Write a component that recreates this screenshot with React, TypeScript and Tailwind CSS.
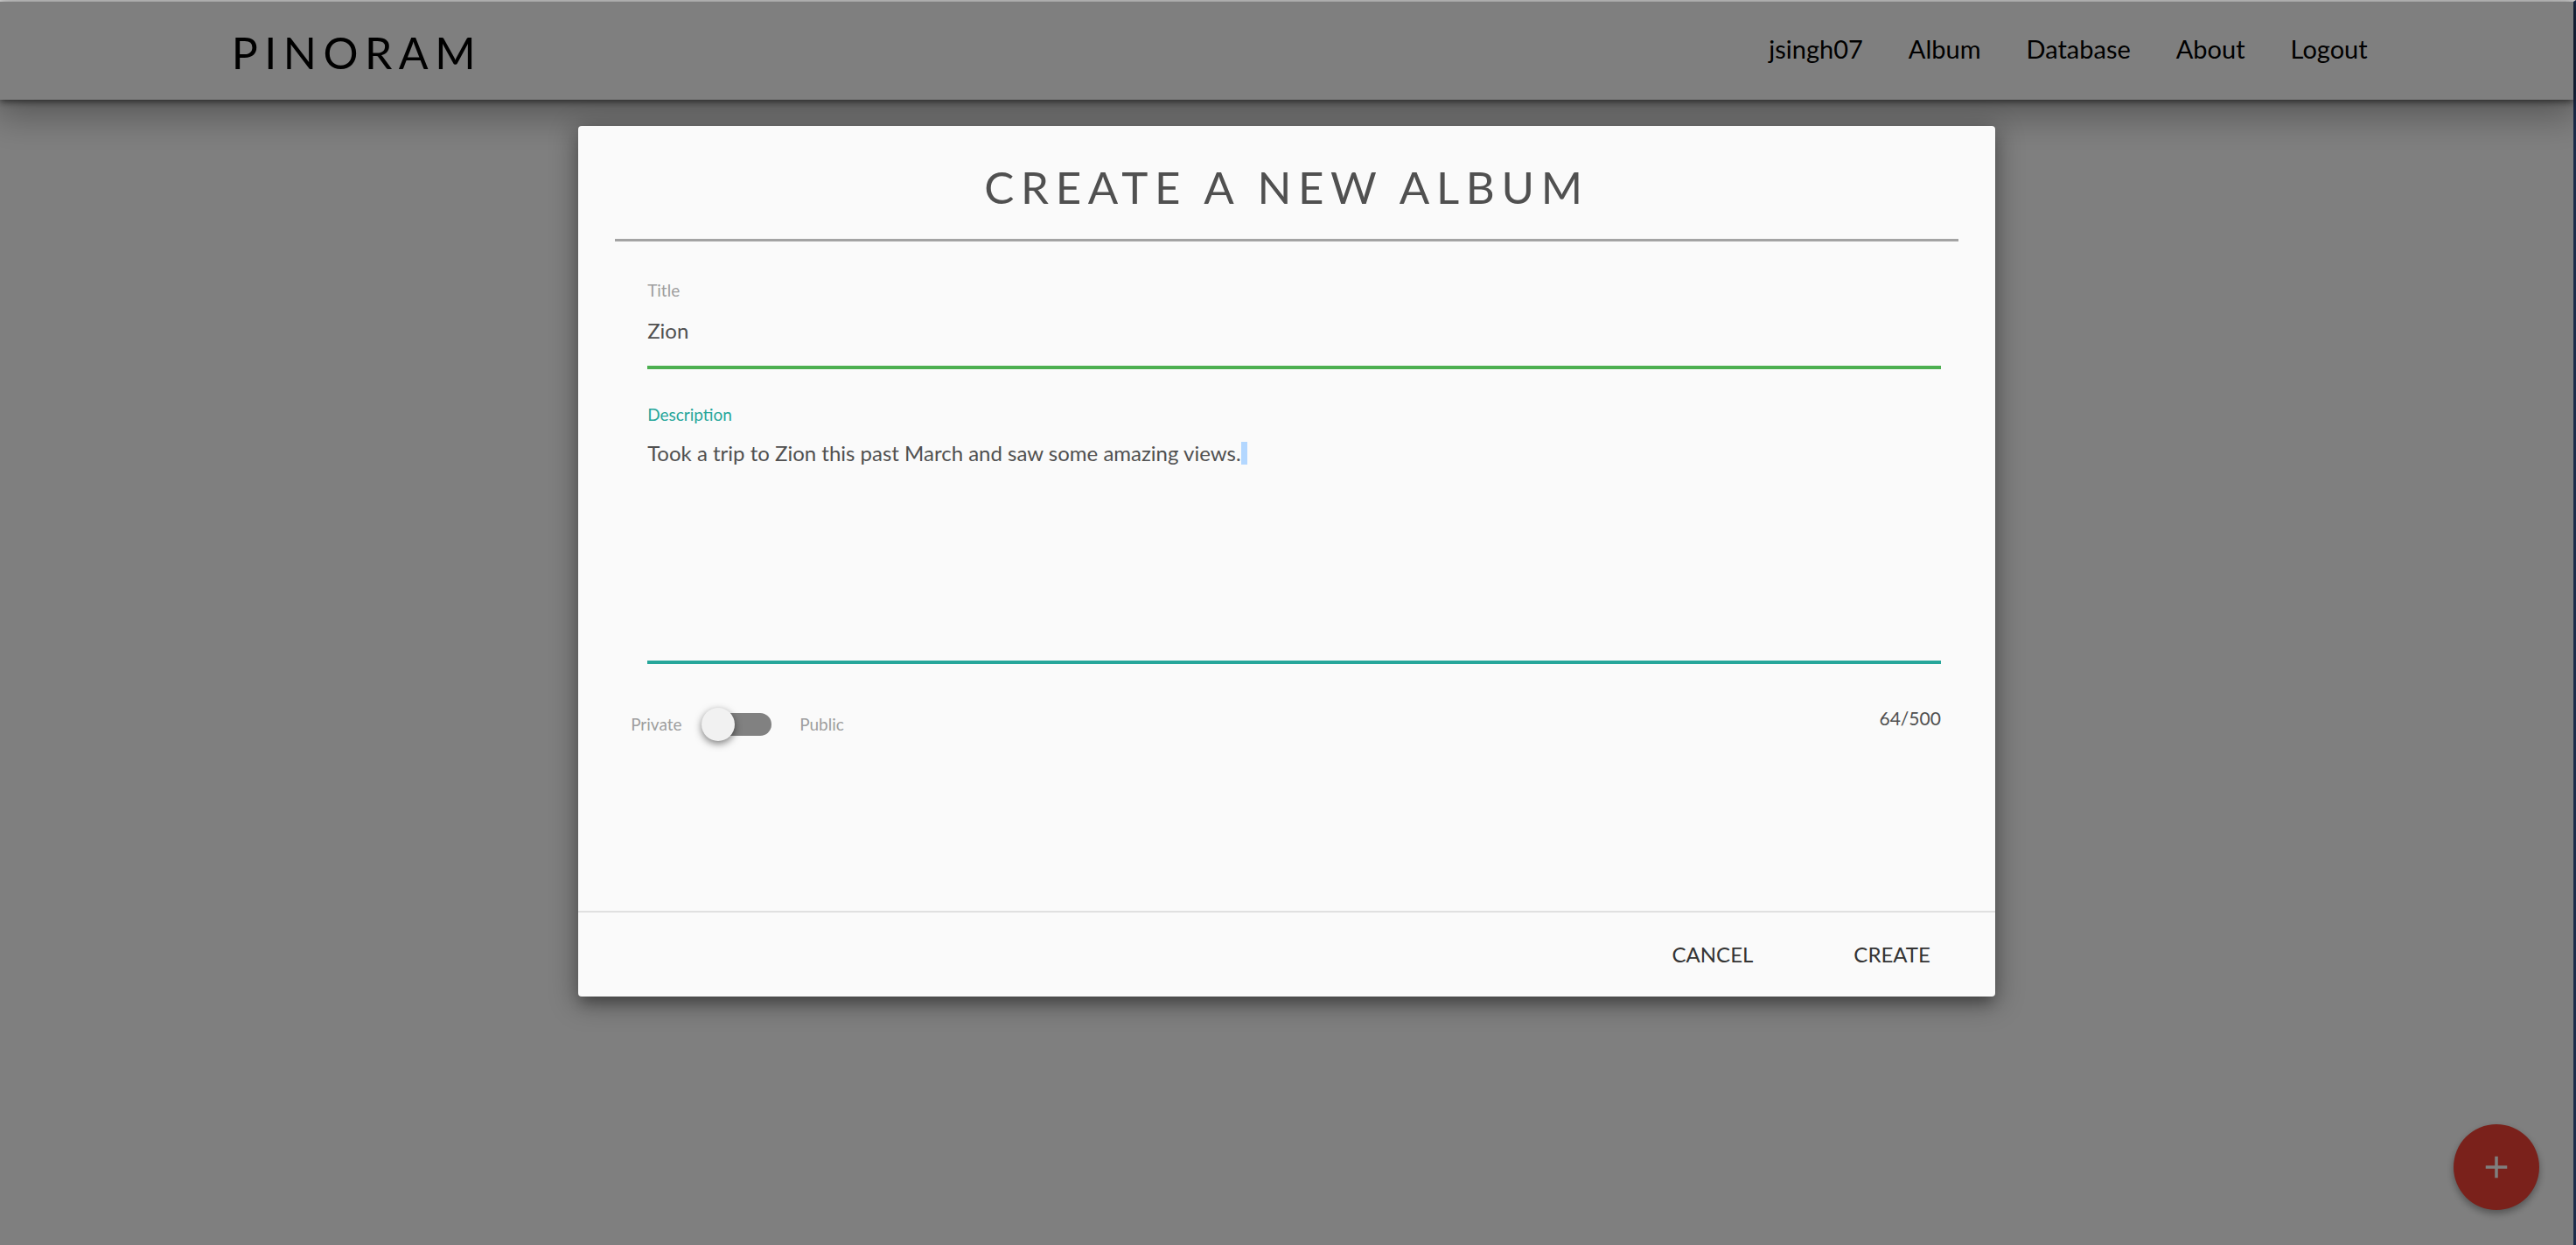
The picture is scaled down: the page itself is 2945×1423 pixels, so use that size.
import { useState } from "react";

const links = ["jsingh07", "Album", "Database", "About", "Logout"];

function NavBar() {
  return (
    <header className="relative flex h-28 items-center justify-between bg-white pl-[9%] pr-[8%] text-black shadow-[0_2px_8px_rgba(0,0,0,0.6),0_16px_40px_4px_rgba(0,0,0,0.3)]">
      <a href="#home" className="pt-1 text-[50px] leading-[60px] tracking-[0.15em]">
        PINORAM
      </a>
      <nav className="flex gap-[52px] pb-1 text-[29px] leading-8">
        {links.map((label) => (
          <a key={label} href={"#" + label.toLowerCase()}>
            {label}
          </a>
        ))}
      </nav>
    </header>
  );
}

function VisibilitySwitch() {
  return (
    <label className="flex items-center text-[19px] leading-6 text-[#9e9e9e]">
      <span className="w-[81px]">Private</span>
      <span className="relative flex h-[38px] w-20 items-center justify-end">
        <input type="checkbox" role="switch" className="peer sr-only" />
        <span className="h-[26px] w-[70px] rounded-full bg-[#818181] peer-checked:bg-[#84c7c1]" />
        <span className="absolute left-0 top-0 size-[38px] rounded-full bg-[#f1f1f1] shadow-[0_3px_8px_rgba(0,0,0,0.5)] peer-checked:left-[42px] peer-checked:bg-[#26a69a]" />
      </span>
      <span className="ml-8">Public</span>
    </label>
  );
}

function AlbumDialog() {
  const [title, setTitle] = useState("Zion");
  const [description, setDescription] = useState(
    "Took a trip to Zion this past March and saw some amazing views.",
  );

  return (
    <form
      role="dialog"
      aria-labelledby="dialog-title"
      onSubmit={(event) => event.preventDefault()}
      className="w-[55vw] rounded-[4px] bg-[#fafafa] text-[#505050] shadow-[0_10px_14px_-4px_rgba(0,0,0,0.3),0_6px_30px_4px_rgba(0,0,0,0.3)]"
    >
      <div className="px-[42px] pt-[38px]">
        <h1 id="dialog-title" className="text-center text-[51px] leading-[64px] tracking-[0.15em]">
          CREATE A NEW ALBUM
        </h1>
        <hr className="mt-[27px] border-t-[3px] border-[#a3a3a3]" />

        <div className="pl-[37px] pr-5 pt-11">
          <div className="flex flex-col">
            <label htmlFor="album-title" className="text-[19px] leading-6 text-[#9e9e9e]">
              Title
            </label>
            <input
              id="album-title"
              value={title}
              onChange={(event) => setTitle(event.target.value)}
              className="h-[78px] border-b-4 border-[#4caf50] pb-2 text-[24px] leading-8 outline-none"
            />
          </div>

          <div className="mt-10 flex flex-col">
            <label htmlFor="album-description" className="text-[19px] leading-6 text-[#26a69a]">
              Description
            </label>
            <div className="relative flex flex-col">
              <textarea
                id="album-description"
                value={description}
                onChange={(event) => setDescription(event.target.value)}
                className="h-[273px] resize-none border-b-4 border-[#26a69a] pt-4 text-[24px] leading-8 outline-none"
              />
              <div aria-hidden="true" className="pointer-events-none absolute left-0 top-4 flex items-center text-[24px] leading-8">
                <span className="invisible">{description}</span>
                <span className="h-[26px] w-[7px] bg-[#b3d7ff]" />
              </div>
            </div>
          </div>
        </div>

        <div className="flex items-start justify-between pb-[194px] pl-[18px] pr-5 pt-[50px]">
          <VisibilitySwitch />
          <output htmlFor="album-description" className="text-[21px] leading-6">
            64/500
          </output>
        </div>
      </div>

      <footer className="flex items-center justify-end gap-[115px] border-t-2 border-[#e0e0e0] px-[74px] py-8 text-[24px] leading-8 text-[#343434]">
        <button type="button">CANCEL</button>
        <button type="submit">CREATE</button>
      </footer>
    </form>
  );
}

export default function App() {
  return (
    <div className="flex min-h-screen flex-col border-r-[3px] border-t-2 border-r-[#1c2c4c] border-t-[#d8d8d8] font-['Lato',sans-serif]">
      <div className="relative flex grow flex-col bg-white">
        <NavBar />
        <button
          type="button"
          aria-label="Add album"
          className="absolute bottom-10 right-[39px] flex size-[98px] items-center justify-center rounded-full bg-[#f44336] text-white shadow-[0_4px_8px_rgba(0,0,0,0.35)]"
        >
          <svg viewBox="0 0 24 24" className="size-[42px]" fill="currentColor" aria-hidden="true">
            <path d="M19 13h-6v6h-2v-6H5v-2h6V5h2v6h6v2z" />
          </svg>
        </button>
        <div className="absolute inset-0 flex items-start justify-center bg-black/50 pt-[10vh]">
          <AlbumDialog />
        </div>
      </div>
    </div>
  );
}
